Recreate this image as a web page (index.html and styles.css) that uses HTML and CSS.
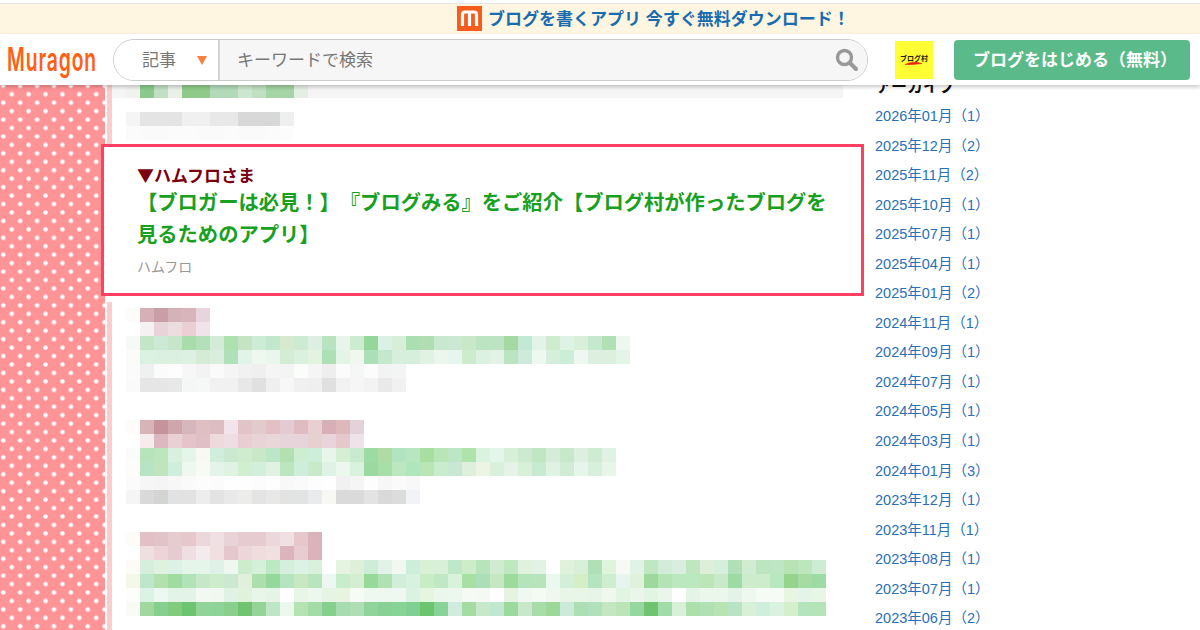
FILE: index.html
```html
<!DOCTYPE html>
<html lang="ja">
<head>
<meta charset="utf-8">
<title>Muragon</title>
<link rel="stylesheet" href="styles.css">
</head>
<body>
<div class="page">
  <div class="notice">
    <svg class="notice-icon" width="25" height="25" viewBox="0 0 25 25"><rect width="25" height="25" fill="#f85c1c"/><path d="M5.5 20V8.5Q5.5 6 8 6H17Q19.5 6 19.5 8.5V20M12.5 7V20" fill="none" stroke="#fff" stroke-width="3.2"/></svg>
    <span class="notice-text">ブログを書くアプリ 今すぐ無料ダウンロード！</span>
  </div>
  <header class="header">
    <div class="logo"><span class="logo-text">Muragon</span></div>
    <div class="search">
      <div class="search-type"><span class="search-label">記事</span><i class="caret"></i></div>
      <div class="search-input">
        <span class="search-label">キーワードで検索</span>
        <svg width="23" height="23" viewBox="0 0 23 23"><circle cx="9.5" cy="9.5" r="7" fill="none" stroke="#999" stroke-width="3.4"/><path d="M14.5 14.5L21 21" stroke="#999" stroke-width="4" stroke-linecap="round"/></svg>
      </div>
    </div>
    <div class="mura">
      <svg width="38" height="38" viewBox="0 0 38 38"><rect width="38" height="38" fill="#ffff33"/><text x="5" y="20" class="mura-text">ブログ村</text><path d="M10 23.5Q18 19.5 27 22.5Q18 24 10 23.5Z" fill="#e8200c" stroke="#e8200c" stroke-width=".5"/></svg>
    </div>
    <a class="start">ブログをはじめる（無料）</a>
  </header>
  <div class="content">
    <div class="pattern"><div class="stripe"></div></div>
    <main class="main">
      <div class="mrow top">
        <i class="lead"></i><i style="background:#f0f3f0"></i><i style="background:#8cc98c"></i><i style="background:#c0dfc5"></i><i style="background:#e8f0e8"></i><i style="background:#8ecb8a"></i><i style="background:#8ecb8a"></i><i style="background:#b2dab8"></i><i style="background:#b2dab8"></i><i style="background:#cde6cf"></i><i style="background:#c0e0c0"></i><i style="background:#a5d4a5"></i><i style="background:#a5d4a5"></i><i style="background:#e4efe6"></i>
      </div>
      <div class="mosaic upper">
        <div class="mrow"><i style="background:#f5f5f5"></i><i style="background:#e4e4e4"></i><i style="background:#e4e4e4"></i><i style="background:#e4e4e4"></i><i style="background:#f0f0f0"></i><i style="background:#f0f0f0"></i><i style="background:#e8e8e8"></i><i style="background:#e8e8e8"></i><i style="background:#d8d8d8"></i><i style="background:#d8d8d8"></i><i style="background:#d8d8d8"></i><i style="background:#eef0f0"></i></div>
        <div class="mrow"><i style="background:#fbfbfb"></i><i style="background:#fafafa"></i><i style="background:#fafafa"></i><i style="background:#fbfbfb"></i><i style="background:#fbfbfb"></i><i style="background:#fafafa"></i><i style="background:#fafafa"></i><i style="background:#fbfbfb"></i><i style="background:#fafafa"></i><i style="background:#fafafa"></i><i style="background:#fbfbfb"></i><i style="background:#fcfcfc"></i></div>
      </div>
      <article class="featured">
        <p class="featured-by">▼ハムフロさま</p>
        <a class="featured-link">【ブロガーは必見！】『ブログみる』をご紹介【ブログ村が作ったブログを見るためのアプリ】</a>
        <p class="featured-author">ハムフロ</p>
      </article>
      <div class="mosaic first">
        <div class="mrow"><i style="background:#fdfcfa"></i><i style="background:#d6b0b6"></i><i style="background:#c99ea6"></i><i style="background:#d5b2b7"></i><i style="background:#d8b5ba"></i><i style="background:#e6d5dc"></i></div>
        <div class="mrow"><i style="background:#ffffff"></i><i style="background:#f5f0f1"></i><i style="background:#e8d4d8"></i><i style="background:#eedde0"></i><i style="background:#eacfd4"></i><i style="background:#f0e4ea"></i></div>
        <div class="mrow"><i style="background:#f6faf5"></i><i style="background:#c3e6c9"></i><i style="background:#cbe9d4"></i><i style="background:#c6e6c9"></i><i style="background:#a8dcab"></i><i style="background:#b3e0b8"></i><i style="background:#d4ecd7"></i><i style="background:#aee0b2"></i><i style="background:#c4e4c3"></i><i style="background:#cdecd6"></i><i style="background:#c3e7cd"></i><i style="background:#d6ead0"></i><i style="background:#cdebd3"></i><i style="background:#dcefe1"></i><i style="background:#b8e3c0"></i><i style="background:#e8f5ea"></i><i style="background:#cbecce"></i><i style="background:#95d69a"></i><i style="background:#dcf1e6"></i><i style="background:#d6efd6"></i><i style="background:#abdeb0"></i><i style="background:#b0deb2"></i><i style="background:#c9e8d0"></i><i style="background:#cbe9d2"></i><i style="background:#c8e8c8"></i><i style="background:#bde4c2"></i><i style="background:#bde4c2"></i><i style="background:#a5d9a3"></i><i style="background:#c4e8d6"></i><i style="background:#e2f3e8"></i><i style="background:#d0ecd0"></i><i style="background:#dff2e6"></i><i style="background:#d8efda"></i><i style="background:#c5e9cc"></i><i style="background:#b0e0b4"></i><i style="background:#edf7f0"></i></div>
        <div class="mrow"><i style="background:#fafcf7"></i><i style="background:#dbf1e2"></i><i style="background:#dbf0e0"></i><i style="background:#dcf0e0"></i><i style="background:#ddf0e2"></i><i style="background:#d4ecd6"></i><i style="background:#daeee0"></i><i style="background:#b0e0b8"></i><i style="background:#e2f3e9"></i><i style="background:#eef8ee"></i><i style="background:#e8f6ee"></i><i style="background:#d4ecd4"></i><i style="background:#dcf0e0"></i><i style="background:#e4f3e0"></i><i style="background:#aee0b6"></i><i style="background:#e4f5e8"></i><i style="background:#f0f8ee"></i><i style="background:#aadfb8"></i><i style="background:#c4e8cc"></i><i style="background:#d6efdc"></i><i style="background:#d6efdc"></i><i style="background:#e0f3e2"></i><i style="background:#ebf6ed"></i><i style="background:#e6f5ee"></i><i style="background:#cdebcd"></i><i style="background:#dcf2e0"></i><i style="background:#e2f2e4"></i><i style="background:#bde4c0"></i><i style="background:#cdeada"></i><i style="background:#ecf8f0"></i><i style="background:#d6efdb"></i><i style="background:#cdeed6"></i><i style="background:#eef8f0"></i><i style="background:#ddf0e0"></i><i style="background:#ddf0e0"></i><i style="background:#e3f4e8"></i></div>
        <div class="mrow"><i style="background:#fbfbfb"></i><i style="background:#eff1f1"></i><i style="background:#fbfbfb"></i><i style="background:#fdfdfd"></i><i style="background:#f7f7f7"></i><i style="background:#f3f3f3"></i><i style="background:#fafafa"></i><i style="background:#f5f5f5"></i><i style="background:#f1f1f1"></i><i style="background:#efefef"></i><i style="background:#f5f5f5"></i><i style="background:#f4f4f4"></i><i style="background:#fbfdfb"></i><i style="background:#f5f5f5"></i><i style="background:#eeeeee"></i><i style="background:#fbfbfb"></i><i style="background:#f5f6f6"></i><i style="background:#fcfcfc"></i><i style="background:#f3f3f3"></i><i style="background:#f3f4f4"></i></div>
        <div class="mrow"><i style="background:#fafafa"></i><i style="background:#e6e6e6"></i><i style="background:#e6e6e6"></i><i style="background:#e8e8e8"></i><i style="background:#f5f6f6"></i><i style="background:#f6f7f7"></i><i style="background:#f1f1f1"></i><i style="background:#f1f1f1"></i><i style="background:#e7e8e7"></i><i style="background:#e0e0e0"></i><i style="background:#efefef"></i><i style="background:#f7f7f7"></i><i style="background:#f0f0f0"></i><i style="background:#efefef"></i><i style="background:#e0e0e0"></i><i style="background:#f2f2f2"></i><i style="background:#f6f6f6"></i><i style="background:#f3f3f3"></i><i style="background:#e9e9e9"></i><i style="background:#f1f1f1"></i></div>
      </div>
      <div class="mosaic">
        <div class="mrow"><i style="background:#fdfcfa"></i><i style="background:#d8b4b9"></i><i style="background:#c4949a"></i><i style="background:#cfa6ac"></i><i style="background:#d8b6be"></i><i style="background:#e0bfc2"></i><i style="background:#ddbcc2"></i><i style="background:#f2e4ea"></i><i style="background:#e2c4c8"></i><i style="background:#e4cbcb"></i><i style="background:#e2c0c5"></i><i style="background:#e4cad2"></i><i style="background:#dfbcc2"></i><i style="background:#e8d0d2"></i><i style="background:#d6b0b6"></i><i style="background:#deb9bb"></i><i style="background:#e4d2da"></i></div>
        <div class="mrow"><i style="background:#ffffff"></i><i style="background:#f6ecee"></i><i style="background:#dcb8c0"></i><i style="background:#e8d0d4"></i><i style="background:#e4c4ca"></i><i style="background:#e0c0c6"></i><i style="background:#eedadc"></i><i style="background:#eedde2"></i><i style="background:#e8cdd2"></i><i style="background:#e8d4d6"></i><i style="background:#e8d6d8"></i><i style="background:#e6d4da"></i><i style="background:#e6d4da"></i><i style="background:#e8d0d0"></i><i style="background:#e8d4da"></i><i style="background:#e4c8cc"></i><i style="background:#efe3ea"></i></div>
        <div class="mrow"><i style="background:#fafcf8"></i><i style="background:#b8e4bc"></i><i style="background:#bde6bf"></i><i style="background:#d8f0de"></i><i style="background:#e4f5ea"></i><i style="background:#f6faf2"></i><i style="background:#d0eedc"></i><i style="background:#cbe8d0"></i><i style="background:#d0ecce"></i><i style="background:#c8e8c8"></i><i style="background:#bce6c8"></i><i style="background:#b4e0b0"></i><i style="background:#cdeed0"></i><i style="background:#cdeed8"></i><i style="background:#e8f5ea"></i><i style="background:#d4efd4"></i><i style="background:#c8ead0"></i><i style="background:#9cdba4"></i><i style="background:#aedca4"></i><i style="background:#b2e4c2"></i><i style="background:#b8e6c0"></i><i style="background:#a8dea0"></i><i style="background:#b8e6b4"></i><i style="background:#bce6c6"></i><i style="background:#b0e3ac"></i><i style="background:#daf2e0"></i><i style="background:#e4f5ea"></i><i style="background:#d6efd6"></i><i style="background:#cde9d0"></i><i style="background:#c0e6c4"></i><i style="background:#d5edd8"></i><i style="background:#c8e8cc"></i><i style="background:#dcf0e0"></i><i style="background:#cfebd2"></i><i style="background:#e0f2e4"></i></div>
        <div class="mrow"><i style="background:#fcfdf8"></i><i style="background:#b8e4c4"></i><i style="background:#c0e4bc"></i><i style="background:#d0eedc"></i><i style="background:#eef8f0"></i><i style="background:#f8faf4"></i><i style="background:#e4f4ea"></i><i style="background:#e0f2e2"></i><i style="background:#d0eed0"></i><i style="background:#d4eedc"></i><i style="background:#e0f3e2"></i><i style="background:#bce6c0"></i><i style="background:#cdeed8"></i><i style="background:#c8eac8"></i><i style="background:#e0f2e6"></i><i style="background:#ecf7ee"></i><i style="background:#d8f2dc"></i><i style="background:#9cd9a0"></i><i style="background:#a8dfa8"></i><i style="background:#bce8c0"></i><i style="background:#b0e6bc"></i><i style="background:#b8e6b4"></i><i style="background:#c8eccc"></i><i style="background:#c8e8d4"></i><i style="background:#deefde"></i><i style="background:#ecf5e4"></i><i style="background:#d8f0dc"></i><i style="background:#e4f3e6"></i><i style="background:#d8f0d8"></i><i style="background:#c8ead0"></i><i style="background:#dff2e4"></i><i style="background:#d0ecd4"></i><i style="background:#e6f5ea"></i><i style="background:#d8efdc"></i><i style="background:#e8f6ea"></i></div>
        <div class="mrow"><i style="background:#fbfbfb"></i><i style="background:#f6f6f6"></i><i style="background:#f5f5f5"></i><i style="background:#f7f7f7"></i><i style="background:#fafafa"></i><i style="background:#fcfcfc"></i><i style="background:#fbfbfb"></i><i style="background:#fefefe"></i><i style="background:#fefefe"></i><i style="background:#fcfcfc"></i><i style="background:#fefefe"></i><i style="background:#f8f8f8"></i><i style="background:#fafafa"></i><i style="background:#fdfdfd"></i><i style="background:#fefefe"></i><i style="background:#f1f1f1"></i><i style="background:#f5f5f5"></i><i style="background:#fdfdfd"></i><i style="background:#f7f7f7"></i><i style="background:#fafafa"></i><i style="background:#f8f8f8"></i></div>
        <div class="mrow"><i style="background:#f5f5f5"></i><i style="background:#d9d9d9"></i><i style="background:#d4d4d2"></i><i style="background:#e1e2e4"></i><i style="background:#e2e2e2"></i><i style="background:#ededed"></i><i style="background:#e3e3e3"></i><i style="background:#e9e9e9"></i><i style="background:#ececea"></i><i style="background:#e4e4e4"></i><i style="background:#e8e8e8"></i><i style="background:#e3e3e1"></i><i style="background:#e2e4e4"></i><i style="background:#e9ebed"></i><i style="background:#f7f7f4"></i><i style="background:#dadada"></i><i style="background:#dadada"></i><i style="background:#e3e3e3"></i><i style="background:#d9d9d9"></i><i style="background:#dcdcdc"></i><i style="background:#f2f3f6"></i></div>
      </div>
      <div class="mosaic">
        <div class="mrow"><i style="background:#fdfcf8"></i><i style="background:#e2c0c6"></i><i style="background:#e2c4c8"></i><i style="background:#e6ccd0"></i><i style="background:#e6c8cc"></i><i style="background:#ecd8dc"></i><i style="background:#f0e0e4"></i><i style="background:#e8d4d8"></i><i style="background:#e6ccd0"></i><i style="background:#e6ccd0"></i><i style="background:#ecd8dc"></i><i style="background:#f0e0e4"></i><i style="background:#e6c8cc"></i><i style="background:#dab4ba"></i></div>
        <div class="mrow"><i style="background:#ffffff"></i><i style="background:#f0dfe1"></i><i style="background:#ecd4d8"></i><i style="background:#e6ccd2"></i><i style="background:#f0dfe2"></i><i style="background:#f4ebee"></i><i style="background:#f0e0e2"></i><i style="background:#e4c8ce"></i><i style="background:#ecd6da"></i><i style="background:#eedcdf"></i><i style="background:#f0e0e0"></i><i style="background:#dcb4be"></i><i style="background:#e8ccd2"></i><i style="background:#dab4ba"></i></div>
        <div class="mrow"><i style="background:#fbfcf6"></i><i style="background:#d6efdc"></i><i style="background:#dff2e0"></i><i style="background:#dcf2e6"></i><i style="background:#e6f5ea"></i><i style="background:#e6f5ea"></i><i style="background:#e0f2e8"></i><i style="background:#eef8ee"></i><i style="background:#cdeccc"></i><i style="background:#d4f0d8"></i><i style="background:#bde8c4"></i><i style="background:#d4f0dc"></i><i style="background:#dcf2e4"></i><i style="background:#d8f0dc"></i><i style="background:#ffffff"></i><i style="background:#e4f4e0"></i><i style="background:#def0da"></i><i style="background:#ceedd8"></i><i style="background:#e2f2e8"></i><i style="background:#f0f8f0"></i><i style="background:#cdeed8"></i><i style="background:#d8f0d4"></i><i style="background:#d8f0d8"></i><i style="background:#c0e8c8"></i><i style="background:#cdecc8"></i><i style="background:#b8e4bc"></i><i style="background:#d0ecd0"></i><i style="background:#bde8c0"></i><i style="background:#e0f2dc"></i><i style="background:#e2f3e6"></i><i style="background:#ffffff"></i><i style="background:#e0f2dc"></i><i style="background:#d8efd8"></i><i style="background:#b0e0b8"></i><i style="background:#e0f3dc"></i><i style="background:#f5faf4"></i><i style="background:#e0f3e6"></i><i style="background:#c0e8c0"></i><i style="background:#d2ecda"></i><i style="background:#d8eede"></i><i style="background:#c0e6c0"></i><i style="background:#ddefd8"></i><i style="background:#d4efdc"></i><i style="background:#b0dfb8"></i><i style="background:#d2ecd2"></i><i style="background:#bde6c0"></i><i style="background:#bde6c4"></i><i style="background:#b8e4b4"></i><i style="background:#bde6bc"></i><i style="background:#cdecd4"></i></div>
        <div class="mrow"><i style="background:#f4f8e8"></i><i style="background:#bde6cc"></i><i style="background:#b4e0b0"></i><i style="background:#a0dba0"></i><i style="background:#b0e4b8"></i><i style="background:#c4e8c8"></i><i style="background:#cdeccc"></i><i style="background:#cce8d0"></i><i style="background:#e0f0dc"></i><i style="background:#acdfac"></i><i style="background:#94d89c"></i><i style="background:#b4e4c0"></i><i style="background:#c8e8c4"></i><i style="background:#b8e4c0"></i><i style="background:#eef8f2"></i><i style="background:#c8eccc"></i><i style="background:#d4eed0"></i><i style="background:#96d998"></i><i style="background:#b0e0b4"></i><i style="background:#d0eed8"></i><i style="background:#d8f2e0"></i><i style="background:#c8ecc4"></i><i style="background:#c0e8c4"></i><i style="background:#d8f2dc"></i><i style="background:#a8e0a4"></i><i style="background:#acdfb8"></i><i style="background:#c4e8c0"></i><i style="background:#9cdb9c"></i><i style="background:#b4e4bc"></i><i style="background:#b8e4bc"></i><i style="background:#eaf8f0"></i><i style="background:#d4efd8"></i><i style="background:#d4efc8"></i><i style="background:#b4e4c0"></i><i style="background:#cfeed0"></i><i style="background:#e6f6ee"></i><i style="background:#e0f2dc"></i><i style="background:#9ed99c"></i><i style="background:#b4e4b4"></i><i style="background:#bce8c0"></i><i style="background:#bce8c0"></i><i style="background:#bce6b8"></i><i style="background:#c8eac8"></i><i style="background:#9cdca4"></i><i style="background:#cdeccc"></i><i style="background:#cdeccc"></i><i style="background:#b8e8c0"></i><i style="background:#94d48c"></i><i style="background:#a4dca4"></i><i style="background:#9cdca4"></i></div>
        <div class="mrow"><i style="background:#fdfefb"></i><i style="background:#dcf2e4"></i><i style="background:#ecf8f2"></i><i style="background:#e2f4e8"></i><i style="background:#e4f3e8"></i><i style="background:#f2f9f2"></i><i style="background:#f0f8f0"></i><i style="background:#e0f2e4"></i><i style="background:#e0f2dc"></i><i style="background:#e8f6ea"></i><i style="background:#e6f4e8"></i><i style="background:#ffffff"></i><i style="background:#e8f6e8"></i><i style="background:#ecf7ee"></i><i style="background:#e6f4e4"></i><i style="background:#e6f4e0"></i><i style="background:#f6fbf6"></i><i style="background:#eef8f0"></i><i style="background:#eef8f0"></i><i style="background:#eef8f0"></i><i style="background:#dcf2e0"></i><i style="background:#e4f5e0"></i><i style="background:#ecf7ec"></i><i style="background:#ecf7ee"></i><i style="background:#f5faf4"></i><i style="background:#f4f9f4"></i><i style="background:#ffffff"></i><i style="background:#e4f4e0"></i><i style="background:#f0f9f0"></i><i style="background:#f4fbf4"></i><i style="background:#eef8ee"></i><i style="background:#e8f6e8"></i><i style="background:#e8f6e8"></i><i style="background:#e6f5e8"></i><i style="background:#eef8ec"></i><i style="background:#e2f4e2"></i><i style="background:#eaf6ea"></i><i style="background:#e2f4e2"></i><i style="background:#eaf6ec"></i><i style="background:#ffffff"></i><i style="background:#e4f4e6"></i><i style="background:#ecf7ec"></i><i style="background:#ecf7ec"></i><i style="background:#e4f3e8"></i><i style="background:#eef8ee"></i><i style="background:#f6fbf6"></i><i style="background:#f6fbf6"></i><i style="background:#e6f6e0"></i><i style="background:#e4f4e8"></i><i style="background:#e8f6e8"></i></div>
        <div class="mrow"><i style="background:#f8fbf6"></i><i style="background:#a0d8a0"></i><i style="background:#84d08c"></i><i style="background:#80cc7c"></i><i style="background:#6cc470"></i><i style="background:#90d498"></i><i style="background:#8cd498"></i><i style="background:#88d08c"></i><i style="background:#70c470"></i><i style="background:#94d498"></i><i style="background:#bce6c4"></i><i style="background:#ecf8ee"></i><i style="background:#b4e4b4"></i><i style="background:#a4dca8"></i><i style="background:#84d08c"></i><i style="background:#a8dcb0"></i><i style="background:#aedfb4"></i><i style="background:#90d49c"></i><i style="background:#88d094"></i><i style="background:#88d494"></i><i style="background:#80d094"></i><i style="background:#6cc46c"></i><i style="background:#88d498"></i><i style="background:#d0ecdc"></i><i style="background:#a4dca4"></i><i style="background:#c8e8cc"></i><i style="background:#c0e8d0"></i><i style="background:#9cd99c"></i><i style="background:#c8e8cc"></i><i style="background:#a8dca8"></i><i style="background:#9cd898"></i><i style="background:#ccead8"></i><i style="background:#acdfb4"></i><i style="background:#b0e0bc"></i><i style="background:#c4e6c0"></i><i style="background:#bce4b8"></i><i style="background:#94d8a0"></i><i style="background:#70c470"></i><i style="background:#a0dca8"></i><i style="background:#d8f0d8"></i><i style="background:#acdfac"></i><i style="background:#b0e0b4"></i><i style="background:#b8e4b4"></i><i style="background:#b8e4c4"></i><i style="background:#d8f0d8"></i><i style="background:#cfeedc"></i><i style="background:#dcf2e0"></i><i style="background:#d4efcc"></i><i style="background:#b4e4bc"></i><i style="background:#b4e4b8"></i></div>
      </div>
    </main>
    <aside class="archive">
      <h2 class="archive-title">アーカイブ</h2>
      <ul class="archive-list">
        <li><a>2026年01月（1）</a></li>
        <li><a>2025年12月（2）</a></li>
        <li><a>2025年11月（2）</a></li>
        <li><a>2025年10月（1）</a></li>
        <li><a>2025年07月（1）</a></li>
        <li><a>2025年04月（1）</a></li>
        <li><a>2025年01月（2）</a></li>
        <li><a>2024年11月（1）</a></li>
        <li><a>2024年09月（1）</a></li>
        <li><a>2024年07月（1）</a></li>
        <li><a>2024年05月（1）</a></li>
        <li><a>2024年03月（1）</a></li>
        <li><a>2024年01月（3）</a></li>
        <li><a>2023年12月（1）</a></li>
        <li><a>2023年11月（1）</a></li>
        <li><a>2023年08月（1）</a></li>
        <li><a>2023年07月（1）</a></li>
        <li><a>2023年06月（2）</a></li>
      </ul>
    </aside>
  </div>
</div>
</body>
</html>
```

FILE: styles.css
```css
* { box-sizing: border-box; }
html, body { margin: 0; padding: 0; }
body {
  width: 1200px;
  height: 630px;
  overflow: hidden;
  background: #fff;
  font-family: "Liberation Sans", "Noto Sans CJK JP", sans-serif;
  text-spacing-trim: space-all;
}
p, h2, ul { margin: 0; padding: 0; }
.page { display: flex; flex-direction: column; height: 630px; }

.notice {
  height: 34px;
  border-top: 3px solid #fff;
  box-shadow: inset 0 1px 0 #e4e4e4;
  background: #fef6e0;
  display: flex;
  align-items: center;
  gap: 6px;
  color: #1a6cb0;
  font-size: 17px;
  font-weight: 700;
  padding-left: 457px;
  flex: none;
}
.notice-icon { flex: none; }
.notice-text { padding-bottom: 3px; }

.header {
  position: relative;
  z-index: 5;
  height: 51px;
  flex: none;
  background: #fff;
  box-shadow: 0 2px 4px rgba(0, 0, 0, .22);
  display: flex;
  align-items: center;
  padding: 0 10px 0 7px;
}
.logo { flex: none; width: 91px; height: 36px; line-height: 34px; white-space: nowrap; }
.logo-text {
  display: inline-block;
  font-family: Inter, sans-serif;
  font-size: 33px;
  font-weight: 600;
  letter-spacing: 1.5px;
  color: #ff6014;
  transform: scaleX(.585);
  transform-origin: left center;
}
.search {
  margin-left: 15px;
  width: 755px;
  height: 42px;
  flex: none;
  display: flex;
  border: 1px solid #ccc;
  border-radius: 21px;
  overflow: hidden;
  color: #777;
}
.search-label { padding-bottom: 2px; }
.search-type {
  width: 106px;
  flex: none;
  background: #fff;
  border-right: 2px solid #d4d4d4;
  display: flex;
  align-items: center;
  padding-left: 28px;
  font-size: 17px;
}
.caret {
  margin-left: 21px;
  margin-top: 1px;
  width: 0;
  height: 0;
  border-left: 5.5px solid transparent;
  border-right: 5.5px solid transparent;
  border-top: 9px solid #ff7f40;
}
.search-input {
  flex: 1;
  background: #f6f6f6;
  display: flex;
  align-items: center;
  justify-content: space-between;
  padding: 0 9px 0 17px;
  font-size: 17px;
}
.mura { margin-left: 27px; flex: none; height: 38px; }
.mura svg { display: block; }
.mura-text {
  font-family: "Noto Sans CJK JP", sans-serif;
  font-size: 7px;
  font-weight: 700;
  fill: #222;
}
.start {
  margin-left: 21px;
  width: 236px;
  height: 40px;
  flex: none;
  background: #5aba8a;
  border-radius: 4px;
  color: #fff;
  font-size: 17px;
  font-weight: 700;
  display: flex;
  align-items: center;
  justify-content: center;
  padding: 0 0 2px 6px;
}

.content { flex: 1; display: flex; min-height: 0; }
.pattern {
  width: 105px;
  flex: none;
  position: relative;
  background-color: #ff9497;
  background-image:
    radial-gradient(circle at center, #fff 0, #fff 1.7px, transparent 2.7px),
    radial-gradient(circle at center, #fff 0, #fff 1.7px, transparent 2.7px);
  background-size: 16.9px 16.9px;
  background-position: -5.15px -7.65px, 3.3px .8px;
}
.stripe {
  position: absolute;
  left: 107px;
  top: 0;
  bottom: 0;
  width: 5px;
  background: #ffcccc;
}
.main {
  width: 770px;
  flex: none;
  padding-left: 21px;
}
.mrow { display: flex; height: 14px; }
.mrow i { display: block; width: 14px; height: 14px; flex: none; }
.mrow.top {
  height: 13px;
  margin-left: -14px;
  width: 731px;
  background: #f5f5f5;
}
.mrow.top i { height: 13px; }
.mosaic { margin-top: 28px; }
.mosaic.upper { margin-top: 14px; }
.mosaic.first { margin-top: 12px; }

.featured {
  position: relative;
  z-index: 2;
  margin: 4px 0 0 -25px;
  width: 763px;
  height: 152px;
  border: 3px solid #ff4062;
  background: #fff;
  padding: 16px 0 0 33px;
}
.featured::after {
  content: "";
  position: absolute;
  left: 1px;
  top: 100%;
  margin-top: 3px;
  width: 10px;
  height: 6px;
  background: #fff;
}
.featured-by {
  color: #7a0010;
  font-family: "Noto Sans CJK JP", sans-serif;
  font-size: 17px;
  font-weight: 700;
  line-height: 24px;
}
.featured-link {
  display: block;
  color: #18a020;
  font-size: 20.3px;
  font-weight: 700;
  line-height: 32px;
  width: 695px;
}
.featured-author {
  margin-top: 5px;
  color: #999;
  font-size: 14px;
  line-height: 22px;
}

.archive {
  flex: 1;
  margin-top: -14px;
}
.archive-title {
  font-size: 16px;
  font-weight: 700;
  line-height: 31px;
  color: #111;
  padding-left: 1px;
}
.archive-list { list-style: none; }
.archive-list li {
  height: 29.55px;
  line-height: 29.55px;
  font-size: 14.5px;
  color: #2a70b8;
  white-space: nowrap;
}
```
